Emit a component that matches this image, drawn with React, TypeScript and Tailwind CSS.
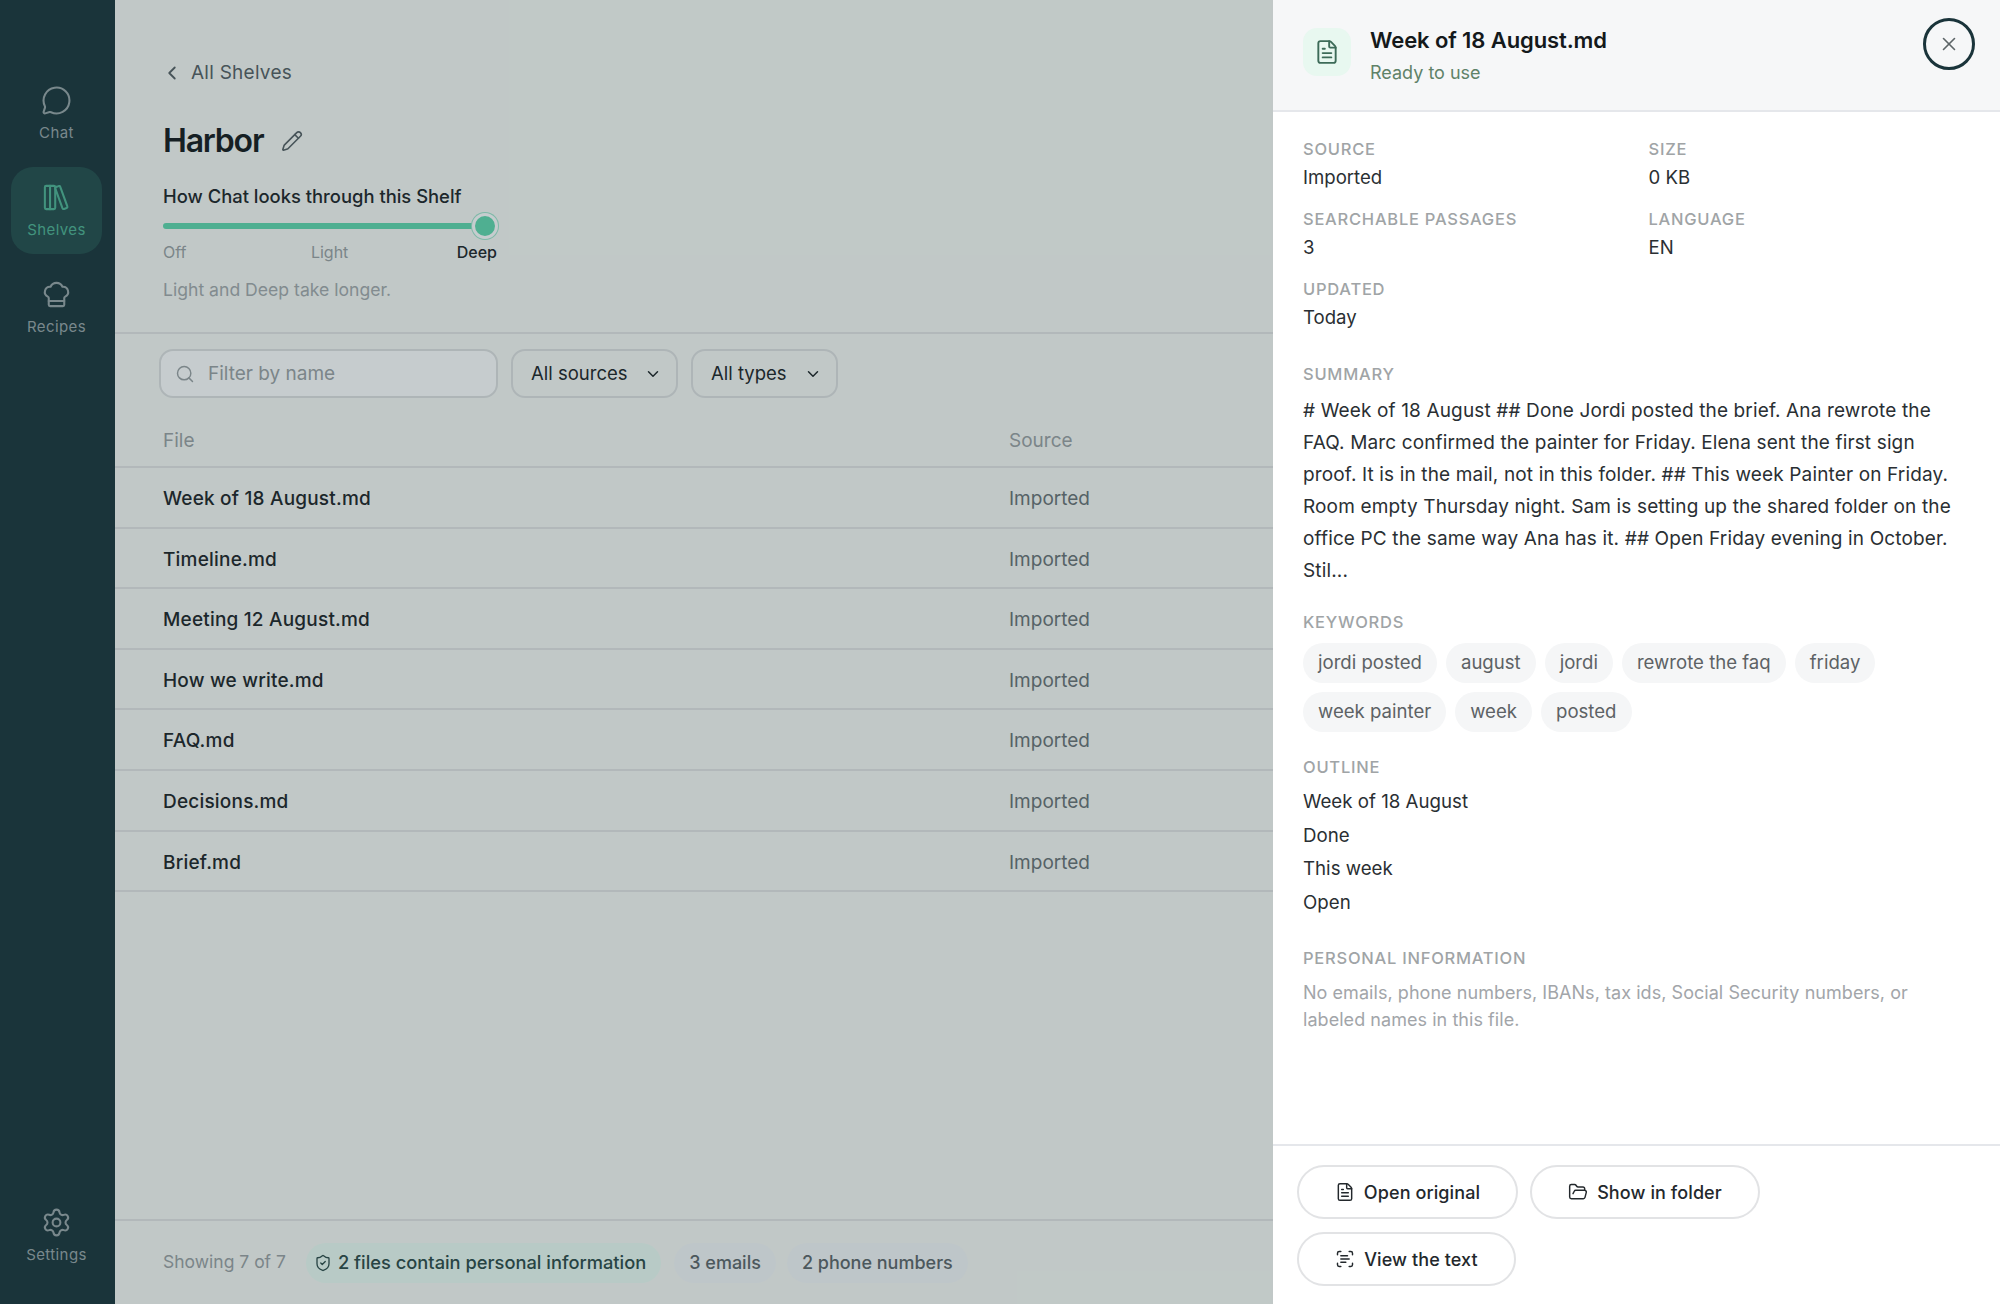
import {
  ChefHat,
  ChevronDown,
  ChevronLeft,
  FileText,
  FolderOpen,
  LibraryBig,
  MessageCircle,
  Pencil,
  ScanText,
  Search,
  Settings,
  ShieldCheck,
  X,
} from 'lucide-react';
import React from 'react';

const files = [
  'Week of 18 August.md',
  'Timeline.md',
  'Meeting 12 August.md',
  'How we write.md',
  'FAQ.md',
  'Decisions.md',
  'Brief.md',
];

const keywordRows = [
  ['jordi posted', 'august', 'jordi', 'rewrote the faq', 'friday'],
  ['week painter', 'week', 'posted'],
];

const outline = ['Week of 18 August', 'Done', 'This week', 'Open'];

type NavItemProps = {
  icon: React.ReactNode;
  label: string;
  active?: boolean;
};

const NavItem = ({ icon, label, active }: NavItemProps) => (
  <div
    className={`flex h-[87px] w-[91px] flex-col items-center justify-center gap-[7px] rounded-[22px] ${
      active ? 'bg-[#234d4b] text-[#4fb394]' : 'text-[#98a5a7]'
    }`}
  >
    {icon}
    <span className="text-[15px] leading-[20px] tracking-[0.4px]">{label}</span>
  </div>
);

const Sidebar = () => (
  <aside className="flex h-full w-[115px] shrink-0 flex-col items-center justify-between bg-[#1a343a] pt-[70px] pr-[2px] pb-[25px]">
    <div className="flex flex-col gap-[10px]">
      <NavItem icon={<MessageCircle size={31} strokeWidth={1.6} />} label="Chat" />
      <NavItem icon={<LibraryBig size={31} strokeWidth={1.6} />} label="Shelves" active />
      <NavItem icon={<ChefHat size={31} strokeWidth={1.6} />} label="Recipes" />
    </div>
    <NavItem icon={<Settings size={31} strokeWidth={1.6} />} label="Settings" />
  </aside>
);

const FilterSelect = ({ label, width }: { label: string; width: string }) => (
  <div
    className={`flex h-[49px] items-center justify-between rounded-[14px] border-2 border-[#dfe1e1] bg-[#f9faf6] pr-[14px] pl-[18px] text-[18.5px] text-[#1c2326] ${width}`}
  >
    {label}
    <ChevronDown size={18} strokeWidth={2} />
  </div>
);

const Shelf = () => (
  <main className="flex h-full min-w-0 flex-1 flex-col bg-[#f9faf6]">
    <div className="h-[334px] shrink-0 border-b-2 border-[#e4e5e5] pt-[60px] pl-[48px]">
      <div className="flex h-[26px] items-center gap-[8px] text-[19px] tracking-[0.25px] text-[#565f63]">
        <ChevronLeft size={22} strokeWidth={2} className="-ml-[2px]" />
        All Shelves
      </div>
      <div className="mt-[28px] flex h-[54px] items-center gap-[18px]">
        <h1 className="text-[32px] font-semibold tracking-[-1.2px] text-[#14191b]">Harbor</h1>
        <Pencil size={22} strokeWidth={1.75} className="text-[#565f63]" />
      </div>
      <p className="mt-[15px] text-[18.4px] leading-[26px] font-medium text-[#1c2326]">
        How Chat looks through this Shelf
      </p>
      <div className="relative mt-[14px] h-[6px] w-[326px] rounded-full bg-[#61d9ae]">
        <div className="absolute top-[-10px] right-[-9px] h-[26px] w-[26px] rounded-full border-[3px] border-[#ffffff] bg-[#61d9ae] shadow-[0_0_0_1px_#9fe6cc]" />
      </div>
      <div className="mt-[11px] flex w-[334px] justify-between text-[16px] leading-[24px] text-[#9ba1a3]">
        <span>Off</span>
        <span className="ml-[16px]">Light</span>
        <span className="font-medium text-[#1c2326]">Deep</span>
      </div>
      <p className="mt-[13px] text-[17.6px] leading-[26px] text-[#a4a9ab]">Light and Deep take longer.</p>
    </div>
    <div className="flex gap-[13px] pt-[15px] pl-[44px]">
      <div className="flex h-[49px] w-[339px] items-center gap-[13px] rounded-[14px] border-2 border-[#dfe1e1] bg-[#ffffff] pl-[14px] text-[19px] text-[#9ba1a3]">
        <Search size={20} strokeWidth={1.75} />
        <span className="pt-[2px]">Filter by name</span>
      </div>
      <FilterSelect label="All sources" width="w-[167px]" />
      <FilterSelect label="All types" width="w-[147px]" />
    </div>
    <div className="mt-[18px] flex h-[52px] items-center border-b-2 border-[#e4e5e5] pl-[48px] text-[19px] text-[#9ba1a3]">
      <span className="w-[846px]">File</span>
      <span>Source</span>
    </div>
    {files.map((file) => (
      <div
        key={file}
        className="flex h-[60.6px] items-center border-b-2 border-[#e4e5e5] pt-[4px] pl-[48px] text-[19px]"
      >
        <span className="w-[846px] font-[450] tracking-[0.2px] text-[#1c2326]">{file}</span>
        <span className="text-[#6a7275]">Imported</span>
      </div>
    ))}
    <div className="mt-auto flex h-[85px] items-center border-t-2 border-[#e4e5e5] pl-[48px] text-[18px]">
      <span className="mr-[20px] text-[17.5px] text-[#9ba1a3]">Showing 7 of 7</span>
      <span className="flex h-[40px] items-center gap-[6px] rounded-full bg-[#ecfdf5] pr-[15px] pl-[8px] text-[18.3px] font-medium text-[#2c4a47]">
        <ShieldCheck size={18} strokeWidth={1.75} />
        2 files contain personal information
      </span>
      <span className="ml-[13px] flex h-[40px] items-center rounded-full bg-[#f5f7f8] px-[15px] font-medium text-[#5d6568]">
        3 emails
      </span>
      <span className="ml-[11px] flex h-[40px] items-center rounded-full bg-[#f5f7f8] px-[15px] font-medium text-[#5d6568]">
        2 phone numbers
      </span>
    </div>
  </main>
);

const Label = ({ children }: { children: React.ReactNode }) => (
  <div className="text-[16.5px] leading-[22px] font-medium tracking-[0.75px] text-[#a0a4a6]">{children}</div>
);

const Meta = ({ label, value }: { label: string; value: string }) => (
  <div className="h-[70px]">
    <Label>{label}</Label>
    <div className="mt-[4px] text-[18.6px] leading-[26px] text-[#2a2f33]">{value}</div>
  </div>
);

const ActionButton = ({ icon, label, width }: { icon: React.ReactNode; label: string; width: string }) => (
  <div
    className={`flex h-[54px] items-center justify-center gap-[9px] rounded-full border-2 border-[#e2e3e5] bg-white text-[18px] font-medium tracking-[0.1px] text-[#23282c] ${width}`}
  >
    {icon}
    {label}
  </div>
);

const DetailPanel = () => (
  <aside className="absolute top-0 right-0 bottom-0 flex w-[727px] flex-col bg-white">
    <header className="flex h-[112px] shrink-0 items-start border-b-2 border-[#e5e7eb] bg-[#f6f7f8] pt-[18px] pr-[25px] pl-[30px]">
      <div className="mt-[10px] flex h-[48px] w-[48px] items-center justify-center rounded-[14px] bg-[#e8f8f0] text-[#3d6b58]">
        <FileText size={26} strokeWidth={1.75} />
      </div>
      <div className="ml-[19px] flex-1">
        <div className="mt-[8px] text-[22px] leading-[28px] font-semibold tracking-[-0.1px] text-[#14191b]">
          Week of 18 August.md
        </div>
        <div className="mt-[6px] text-[18px] leading-[26px] text-[#5f8268]">Ready to use</div>
      </div>
      <div className="flex h-[52px] w-[52px] items-center justify-center rounded-full border-[3px] border-[#1a343a] text-[#5d6568]">
        <X size={22} strokeWidth={1.75} />
      </div>
    </header>
    <div className="flex-1 pt-[26px] pr-[30px] pl-[30px]">
      <div className="grid grid-cols-2 gap-x-[24px]">
        <Meta label="SOURCE" value="Imported" />
        <Meta label="SIZE" value="0 KB" />
        <Meta label="SEARCHABLE PASSAGES" value="3" />
        <Meta label="LANGUAGE" value="EN" />
        <Meta label="UPDATED" value="Today" />
      </div>
      <div className="mt-[15px]">
        <Label>SUMMARY</Label>
        <p className="mt-[10px] text-[19px] leading-[31.9px] tracking-[0.14px] text-[#2a2f33]">
          # Week of 18 August ## Done Jordi posted the brief. Ana rewrote the FAQ. Marc confirmed the painter for
          Friday. Elena sent the first sign proof. It is in the mail, not in this folder. ## This week Painter on
          Friday. Room empty Thursday night. Sam is setting up the shared folder on the office PC the same way Ana
          has it. ## Open Friday evening in October. Stil...
        </p>
      </div>
      <div className="mt-[25px]">
        <Label>KEYWORDS</Label>
        <div className="mt-[10px] flex flex-col gap-[9px]">
          {keywordRows.map((row) => (
            <div key={row[0]} className="flex gap-[9px]">
              {row.map((word) => (
                <span
                  key={word}
                  className="flex h-[40px] items-center rounded-full bg-[#f5f6f7] px-[15px] text-[18.6px] text-[#5d6265]"
                >
                  {word}
                </span>
              ))}
            </div>
          ))}
        </div>
      </div>
      <div className="mt-[24px]">
        <Label>OUTLINE</Label>
        <div className="mt-[7px] flex flex-col text-[18.7px] leading-[33.4px] text-[#2a2f33]">
          {outline.map((line) => (
            <div key={line}>{line}</div>
          ))}
        </div>
      </div>
      <div className="mt-[28px]">
        <Label>PERSONAL INFORMATION</Label>
        <p className="mt-[10px] text-[18px] leading-[27px] tracking-[0.05px] text-[#a2a5a9]">
          No emails, phone numbers, IBANs, tax ids, Social Security numbers, or labeled names in this file.
        </p>
      </div>
    </div>
    <footer className="flex h-[160px] shrink-0 flex-col gap-[13px] border-t-2 border-[#e5e7eb] pt-[19px] pl-[24px]">
      <div className="flex gap-[12px]">
        <ActionButton icon={<FileText size={20} strokeWidth={1.75} />} label="Open original" width="w-[221px]" />
        <ActionButton icon={<FolderOpen size={20} strokeWidth={1.75} />} label="Show in folder" width="w-[230px]" />
      </div>
      <ActionButton icon={<ScanText size={20} strokeWidth={1.75} />} label="View the text" width="w-[219px]" />
    </footer>
  </aside>
);

const App = () => (
  <div className="relative flex h-screen w-full overflow-hidden font-['Inter',sans-serif]">
    <Sidebar />
    <Shelf />
    <div className="absolute inset-0 bg-[#1a343a]/25" />
    <DetailPanel />
  </div>
);

export default App;
